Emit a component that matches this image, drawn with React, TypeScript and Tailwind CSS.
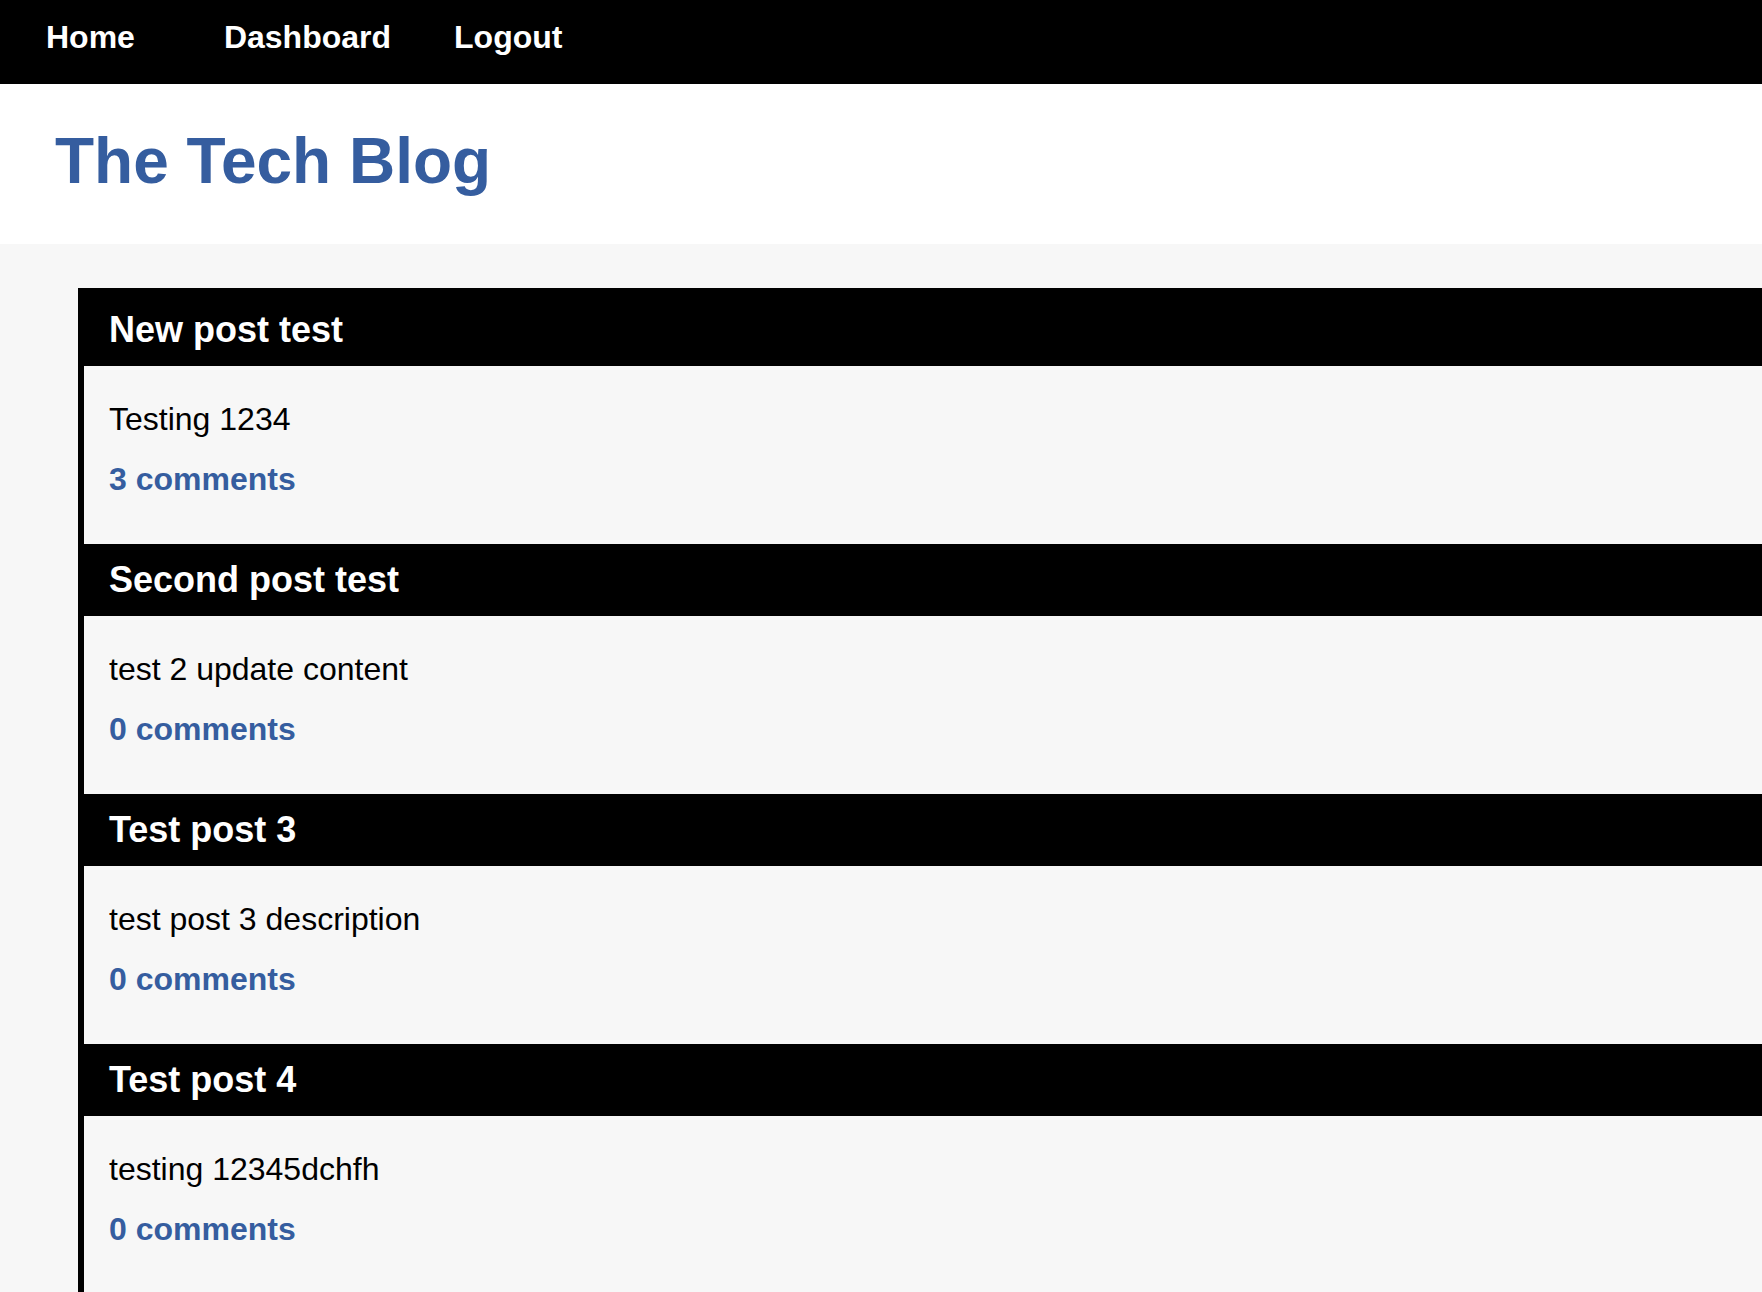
const POSTS = [
  { id: 1, title: 'New post test', content: 'Testing 1234', comments: 3 },
  { id: 2, title: 'Second post test', content: 'test 2 update content', comments: 0 },
  { id: 3, title: 'Test post 3', content: 'test post 3 description', comments: 0 },
  { id: 4, title: 'Test post 4', content: 'testing 12345dchfh', comments: 0 },
]

// ── Top nav ───────────────────────────────────────────────────────────────────

function Nav() {
  return (
    <nav className="h-[84px] bg-black flex items-start pt-[21px] pl-[46px] text-[32px] leading-none font-bold text-white">
      <a href="#" className="block">Home</a>
      <a href="#" className="block ml-[89px]">Dashboard</a>
      <a href="#" className="block ml-[63px]">Logout</a>
    </nav>
  )
}

// ── Post card ─────────────────────────────────────────────────────────────────

function Post({ title, content, comments }: { title: string; content: string; comments: number }) {
  return (
    <article>
      <div className="h-[72px] bg-black pt-[18px] pl-[25px]">
        <h2 className="text-[36px] leading-none font-bold text-white">{title}</h2>
      </div>
      <div className="h-[178px] pt-[37px] pl-[25px]">
        <p className="text-[32px] leading-none text-black">{content}</p>
        <a href="#" className="block mt-[28px] text-[32px] leading-none font-bold text-[#355d9f]">
          {comments} comments
        </a>
      </div>
    </article>
  )
}

export default function App() {
  return (
    <div className="min-h-screen bg-[#f7f7f7] font-['Liberation_Sans',Arial,sans-serif] overflow-hidden">
      <Nav />
      <header className="h-[160px] bg-white pt-[45px] pl-[55px]">
        <h1 className="text-[64px] leading-none font-bold text-[#355d9f]">The Tech Blog</h1>
      </header>

      <main className="pt-[44px] pl-[78px]">
        <div className="border-l-[6px] border-t-[6px] border-black">
          {POSTS.map(p => (
            <Post key={p.id} title={p.title} content={p.content} comments={p.comments} />
          ))}
        </div>
      </main>
    </div>
  )
}
